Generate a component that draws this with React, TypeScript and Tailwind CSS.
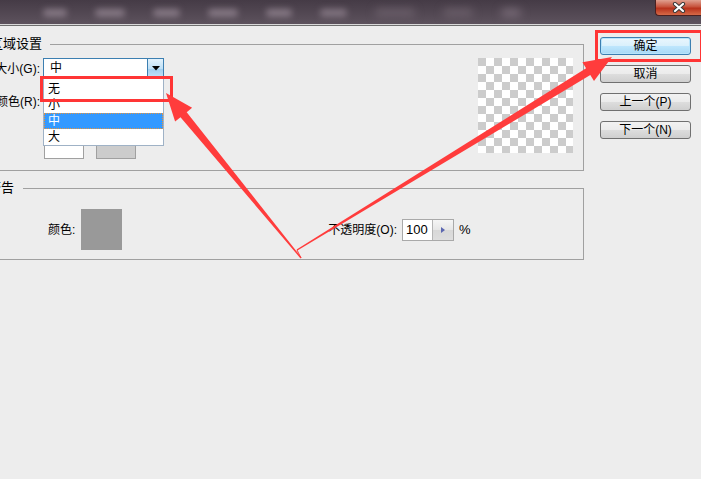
import * as React from 'react';

// Photoshop preference panel (透明区域设置 / 色域警告), cropped on the left, with red annotations

const font = 'font-["Liberation_Sans","Noto_Sans_CJK_SC",sans-serif]';

function TitleBar() {
  return (
    <div className="flex h-[24px] bg-[linear-gradient(#453b46,#5d525d)] overflow-hidden">
      <div className="flex flex-1 items-center gap-[28px] pl-[43px] pt-[2px]">
        <span className="w-[24px] h-[8px] rounded-full bg-[#857884] blur-[3px]" />
        <span className="w-[30px] h-[8px] rounded-full bg-[#857884] blur-[3px]" />
        <span className="w-[27px] h-[8px] rounded-full bg-[#857884] blur-[3px]" />
        <span className="w-[30px] h-[8px] rounded-full bg-[#857884] blur-[3px]" />
        <span className="w-[26px] h-[8px] rounded-full bg-[#857884] blur-[3px]" />
        <span className="w-[27px] h-[8px] rounded-full bg-[#80737f] blur-[3px]" />
        <span className="w-[40px] h-[8px] rounded-full bg-[#6a5e69] blur-[4px]" />
        <span className="w-[30px] h-[8px] rounded-full bg-[#6a5e69] blur-[4px]" />
        <span className="w-[20px] h-[8px] rounded-full bg-[#776a76] blur-[4px]" />
      </div>
      <div className="w-[46px] h-[16px] flex items-center justify-center rounded-bl-[4px] border border-t-0 border-r-0 border-[#4a2020] bg-[linear-gradient(#e0a090,#c7533c_45%,#b8321c_55%,#d66a48)]">
        <svg width="14" height="11" viewBox="0 0 14 11">
          <path d="M3 2 L11 9 M11 2 L3 9" stroke="#3a3a3a" strokeWidth="4.2" strokeLinecap="round" />
          <path d="M3 2 L11 9 M11 2 L3 9" stroke="#ffffff" strokeWidth="2.2" strokeLinecap="round" />
        </svg>
      </div>
    </div>
  );
}

function Select({ value, focused }: { value: string; focused?: boolean }) {
  return (
    <div
      className={
        'flex h-[21px] w-[121px] border bg-white ' +
        (focused ? 'border-[#3c7fb1]' : 'border-[#abadb3]')
      }
    >
      <div className="flex-1 pl-[6px] leading-[19px]">{value}</div>
      <div className="w-[16px] flex items-center justify-center border-l border-[#3c7fb1] bg-[linear-gradient(#e3f2fc,#bfe0f6_50%,#9fcdee_51%,#c5e3f7)]">
        <svg width="8" height="5" viewBox="0 0 8 5">
          <path d="M0 0 H8 L4 4.5 Z" fill="#000" />
        </svg>
      </div>
    </div>
  );
}

function Button({ label, primary }: { label: string; primary?: boolean }) {
  return (
    <div
      className={
        'w-[91px] h-[18px] rounded-[3px] border text-center leading-[16px] ' +
        (primary
          ? 'border-[#3c7fb1] bg-[linear-gradient(#eaf6fd,#d9f0fc_50%,#bee6fd_51%,#a7d9f5)] shadow-[inset_0_0_0_1px_#b8e4fb]'
          : 'border-[#707070] bg-[linear-gradient(#f2f2f2,#ebebeb_50%,#dddddd_51%,#cfcfcf)]')
      }
    >
      {label}
    </div>
  );
}

const sizes = ['无', '小', '中', '大'];

export default function App() {
  return (
    <div className={`relative w-[701px] h-[479px] overflow-hidden bg-[#ededed] text-[12px] text-black ${font}`}>
      <TitleBar />
      <div className="h-px bg-[#d9d9d9]" />
      <div className="h-px bg-[#6e6e6e]" />

      <div className="flex">
        <div className="w-[644px] ml-[-60px] shrink-0">
          <fieldset className="mt-[10px] border border-[#a0a0a0] pt-[6px] pr-[10px] pb-[11px]">
            <legend className="ml-[19px] pl-[4px] pr-[8px] text-[13px] leading-[16px]">透明区域设置</legend>
            <div className="flex justify-between">
              <div className="relative grid grid-cols-[99px_121px] gap-x-[3px] gap-y-[12px] items-center">
                <div className="text-right">大小(G):</div>
                <Select value="中" focused />
                <div className="text-right">颜色(R):</div>
                <Select value="浅" />
                <div />
                <div className="flex gap-[12px] pl-px -mt-[5px]">
                  <div className="w-[40px] h-[40px] border border-[#a0a0a0] bg-white" />
                  <div className="w-[40px] h-[40px] border border-[#a0a0a0] bg-[#cccccc]" />
                </div>

                {/* open dropdown list */}
                <div className="absolute left-[102px] top-[20px] w-[121px] border border-[#9fb2c6] bg-white pt-[2px]">
                  {sizes.map((s) => (
                    <div
                      key={s}
                      className={
                        'h-[16px] leading-[15px] pl-[3px] ' +
                        (s === '中'
                          ? 'bg-[#3399ff] text-white border border-dotted border-[#e8943a]'
                          : 'border border-transparent')
                      }
                    >
                      {s}
                    </div>
                  ))}
                </div>
              </div>
              <div className="w-[95px] h-[95px] bg-[conic-gradient(#fff_25%,#ccc_0_50%,#fff_0_75%,#ccc_0)] bg-[length:16px_16px]" />
            </div>
          </fieldset>

          <fieldset className="mt-[9px] border border-[#a0a0a0] pt-[13px] pb-[9px]">
            <legend className="ml-[17px] pl-[4px] pr-[9px] text-[13px] leading-[16px]">色域警告</legend>
            <div className="flex items-center">
              <span className="ml-[107px]">颜色:</span>
              <div className="ml-[6px] w-[41px] h-[41px] bg-[#999999]" />
              <span className="ml-[206px]">不透明度(O):</span>
              <div className="ml-[5px] flex h-[22px] w-[52px] border border-[#a9a9a9] bg-white">
                <div className="w-[29px] pl-[3px] leading-[20px] text-[13px]">100</div>
                <div className="flex-1 flex items-center justify-center border-l border-[#b5b5b5] bg-[linear-gradient(#f5f5f5,#e6e6e6_50%,#d8d8d8_51%,#dedede)]">
                  <svg width="4" height="6" viewBox="0 0 4 6">
                    <path d="M0 0 L4 3 L0 6 Z" fill="#5b66b0" />
                  </svg>
                </div>
              </div>
              <span className="ml-[5px] text-[13px]">%</span>
            </div>
          </fieldset>
        </div>

        <div className="ml-[16px] pt-[11px] flex flex-col gap-[10px]">
          <Button label="确定" primary />
          <Button label="取消" />
          <Button label="上一个(P)" />
          <Button label="下一个(N)" />
        </div>
      </div>

      {/* red annotations */}
      <div className="absolute left-[40px] top-[76px] w-[133px] h-[26px] border-[3px] border-[#ff3535]" />
      <div className="absolute left-[595px] top-[30px] w-[108px] h-[32px] border-[3px] border-[#ff3535]" />
      <svg className="absolute left-0 top-0 pointer-events-none" width="701" height="479" viewBox="0 0 701 479">
        <polygon
          fill="#ff3c3c"
          points="301.5,257.6 186.7,112.2 192.1,107.8 166,93 175.1,121.6 180.5,117.2 300.5,258.4"
        />
        <polygon
          fill="#ff3c3c"
          points="296.6,249.4 586.1,68.3 582.4,62.3 612,57 594,81.1 590.3,75.1 297.4,250.6"
        />
        <line x1="297" y1="250" x2="301" y2="258" stroke="#ff3c3c" strokeWidth="1" />
      </svg>
    </div>
  );
}
